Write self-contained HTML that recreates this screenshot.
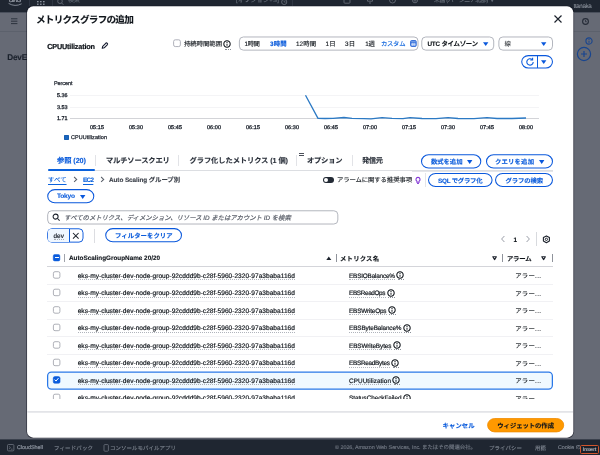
<!DOCTYPE html>
<html lang="ja">
<head>
<meta charset="utf-8">
<title>メトリクスグラフの追加</title>
<style>
html,body{margin:0;padding:0}
body{width:600px;height:455px;overflow:hidden;position:relative;background:#666a75;font-family:"Liberation Sans","Noto Sans CJK JP",sans-serif;color:#0f141a}
#w{position:absolute;left:0;top:0;width:600px;height:455px;overflow:hidden;will-change:transform}
.a{position:absolute;box-sizing:border-box}
.t{position:absolute;white-space:nowrap;margin:0;padding:0;text-rendering:geometricPrecision;-webkit-text-stroke:0.12px}
.l{-webkit-text-stroke:0.2px}
.b{font-weight:700}
.b.l{-webkit-text-stroke:0.1px}
.bl{color:#0b5cdc}
svg{position:absolute;overflow:visible}
</style>
</head>
<body>
<div id="w">
<div class="a" style="left:0px;top:0px;width:600px;height:12px;background:#1f2631"></div>
<div class="a" style="left:0px;top:12px;width:600px;height:1px;background:#4a505c"></div>
<div class="a" style="left:0px;top:31px;width:600px;height:1px;background:#5c616c"></div>
<div class="a" style="left:0px;top:439px;width:600px;height:16px;background:#1f2631"></div>
<div class="a" style="left:0px;top:439px;width:600px;height:1px;background:#3a404c"></div>
<svg style="left:8px;top:0" width="15" height="7" viewBox="0 0 15 7"><path d="M0.6 3.4 Q7 7.2 13.6 3.8" fill="none" stroke="#8a919c" stroke-width="0.9"/></svg>
<span class="t  l" style="left:8.8px;top:-6.65px;font-size:8.6px;line-height:12.9px;letter-spacing:-1.448px;color:#969ca6;-webkit-text-stroke:0.1px">aws</span>
<svg style="left:37px;top:0" width="8" height="6" viewBox="0 0 8 6"><g fill="#8a919c"><rect x="0" y="1" width="1.6" height="1.3"/><rect x="3" y="1" width="1.6" height="1.3"/><rect x="6" y="1" width="1.6" height="1.3"/><rect x="0" y="3.6" width="1.6" height="1.3"/><rect x="3" y="3.6" width="1.6" height="1.3"/><rect x="6" y="3.6" width="1.6" height="1.3"/></g></svg>
<div class="a" style="left:52px;top:0px;width:1px;height:6px;background:#2e3542"></div>
<div class="a" style="left:29px;top:0px;width:1px;height:6px;background:#2e3542"></div>
<svg style="left:57px;top:0" width="7" height="6" viewBox="0 0 7 6"><circle cx="3" cy="1.2" r="2.3" fill="none" stroke="#6d747f" stroke-width="0.8"/><path d="M4.7 3 L6.4 4.8" stroke="#6d747f" stroke-width="0.8"/></svg>
<span class="t" style="left:68px;top:-3.12px;font-size:5.9px;line-height:8.85px;letter-spacing:0.219px;color:#5a626d">検索</span>
<span class="t" style="left:236px;top:-3.12px;font-size:5.9px;line-height:8.85px;letter-spacing:0.361px;color:#6a717c">[オプション+S]</span>
<svg style="left:281px;top:0" width="7" height="6" viewBox="0 0 7 6"><circle cx="3.2" cy="2" r="2.6" fill="none" stroke="#6d747f" stroke-width="0.8"/><path d="M3.2 0.5v1.6h1.4" fill="none" stroke="#6d747f" stroke-width="0.7"/></svg>
<div class="a" style="left:292px;top:0px;width:1px;height:6px;background:#2e3542"></div>
<svg style="left:343px;top:0" width="80" height="6" viewBox="0 0 80 6"><g fill="none" stroke="#6d747f" stroke-width="0.8"><rect x="1" y="-2" width="6" height="5.2" rx="0.8"/><path d="M24.5 -1 v2.2 h5 v-2.2 M26 3 h2"/><circle cx="49.5" cy="0" r="3"/><path d="M49.5 0.4v0.8"/><circle cx="72" cy="0.2" r="2.6"/><circle cx="72" cy="0.2" r="1"/></g></svg>
<span class="t" style="left:434.0px;top:-3.22px;font-size:5.9px;line-height:8.85px;letter-spacing:-0.38px;color:#6a717c">米国 (バージニア北部) ▼</span>
<span class="t  l" style="left:573.6px;top:1.98px;font-size:6.3px;line-height:9.45px;letter-spacing:-0.409px;color:#9197a1;-webkit-text-stroke:0.05px">ttanaka</span>
<svg style="left:11px;top:18px" width="7" height="7" viewBox="0 0 7 7"><path d="M0 0.8h6.4M0 3.2h6.4M0 5.6h6.4" stroke="#262d38" stroke-width="0.9"/></svg>
<span class="t b l" style="left:7.2px;top:52.15px;font-size:8.2px;line-height:12.3px;letter-spacing:-0.161px;color:#1b212c">DevE</span>
<svg style="left:581.3px;top:16.7px" width="9" height="9" viewBox="0 0 9 9"><circle cx="4.5" cy="4.5" r="2.9" fill="none" stroke="#252b37" stroke-width="1.1"/><path d="M4.5 3.1v1.6h1.2" fill="none" stroke="#252b37" stroke-width="0.85"/></svg>
<svg style="left:584.5px;top:36.5px" width="8" height="8" viewBox="0 0 8 8"><circle cx="4" cy="4" r="3.1" fill="none" stroke="#18458f" stroke-width="1.1"/><path d="M4 3.7v2.1" stroke="#18458f" stroke-width="0.95"/><circle cx="4" cy="2.4" r="0.55" fill="#18458f"/></svg>
<svg style="left:576.2px;top:46.3px" width="16" height="16" viewBox="0 0 16 16"><circle cx="8" cy="8" r="6.6" fill="none" stroke="#18458f" stroke-width="1.2"/><path d="M8 5v6M5 8h6" stroke="#18458f" stroke-width="1.2"/></svg>
<svg style="left:7px;top:443.5px" width="8" height="8" viewBox="0 0 8 8"><rect x="0.5" y="0.5" width="6.4" height="6.4" rx="1" fill="none" stroke="#6d747f" stroke-width="0.8"/><path d="M2 2.4l1.5 1.3L2 5M4 5.2h1.6" fill="none" stroke="#6d747f" stroke-width="0.7"/></svg>
<span class="t  l" style="left:17px;top:444.41px;font-size:5.45px;line-height:8.18px;letter-spacing:-0.035px;color:#8a919c">CloudShell</span>
<span class="t" style="left:54px;top:445.41px;font-size:5.45px;line-height:8.18px;letter-spacing:0.172px;color:#7d848f">フィードバック</span>
<svg style="left:103px;top:443.6px" width="7" height="8" viewBox="0 0 7 8"><rect x="1" y="0.6" width="4.4" height="6.6" rx="0.8" fill="none" stroke="#6d747f" stroke-width="0.8"/></svg>
<span class="t" style="left:110.0px;top:445.41px;font-size:5.45px;line-height:8.18px;letter-spacing:0.066px;color:#7d848f">コンソールモバイルアプリ</span>
<span class="t" style="left:335px;top:444.41px;font-size:5.45px;line-height:8.18px;letter-spacing:-0.044px;color:#737a85">© 2026, Amazon Web Services, Inc. またはその関連会社。</span>
<span class="t" style="left:489.0px;top:445.41px;font-size:5.45px;line-height:8.18px;letter-spacing:0.094px;color:#7d848f">プライバシー</span>
<span class="t" style="left:535px;top:445.41px;font-size:5.45px;line-height:8.18px;letter-spacing:0.109px;color:#7d848f">用語</span>
<span class="t" style="left:558px;top:444.41px;font-size:5.45px;line-height:8.18px;letter-spacing:-0.125px;color:#7d848f">Cookie の</span>
<div class="a" style="left:580px;top:445px;width:19px;height:9px;border:1px solid #d0552d;border-radius:1.5px;background:#1a1f29"></div>
<span class="t  l" style="left:582.6px;top:446.62px;font-size:5.3px;line-height:7.95px;letter-spacing:0.15px;color:#e6e9ee;-webkit-text-stroke:0">Insert</span>
<svg style="left:0;top:0" width="600" height="455"><rect x="26.6" y="5.9" width="547.2" height="432.2" rx="6.6" fill="#000410" fill-opacity="0.5"/><rect x="26.1" y="5.4" width="548.2" height="433.2" rx="7" fill="#000410" fill-opacity="0.22"/><rect x="27.05" y="6.35" width="546.3" height="431.3" rx="6.2" fill="#fff"/></svg>
<span class="t b" style="left:36.0px;top:14.4px;font-size:9.6px;line-height:14.4px;letter-spacing:-0.745px;">メトリクスグラフの追加</span>
<svg style="left:553.3px;top:14.2px" width="10" height="10" viewBox="0 0 10 10"><path d="M1.5 1.5l7 7M8.5 1.5l-7 7" stroke="#1c222c" stroke-width="1.15" fill="none"/></svg>
<span class="t b l" style="left:47.2px;top:41.75px;font-size:7.27px;line-height:10.9px;letter-spacing:-0.174px;-webkit-text-stroke:0.22px">CPUUtilization</span>
<svg style="left:101.2px;top:42px" width="7.5" height="7.5" viewBox="0 0 8 8"><path d="M1.3 6.7l0.5-2.1 3.5-3.5q0.5-0.4 1 0l0.6 0.6q0.4 0.5 0 1l-3.5 3.5z" fill="none" stroke="#141a2e" stroke-width="1.15" stroke-linejoin="round"/></svg>
<svg style="left:0;top:0" width="600" height="455"><rect x="173.62" y="39.82" width="6.75" height="6.75" rx="1.7" fill="#fff" stroke="#a0a3ad" stroke-width="0.85"/></svg>
<span class="t" style="left:184px;top:39.83px;font-size:6.36px;line-height:9.54px;letter-spacing:-0.031px;">持続時間範囲</span>
<svg style="left:223.3px;top:40px" width="8" height="8" viewBox="0 0 8 8"><circle cx="4" cy="4" r="3.2" fill="none" stroke="#0f141a" stroke-width="1.05"/><path d="M4 3.7v2.1" stroke="#0f141a" stroke-width="0.95"/><circle cx="4" cy="2.4" r="0.55" fill="#0f141a"/></svg>
<div class="a" style="left:224.5px;top:48.6px;width:6.5px;height:0px;border-top:1px dotted #8a8f98"></div>
<svg style="left:0;top:0" width="600" height="455"><rect x="239.38" y="36.98" width="178.65" height="13.15" rx="4" fill="#fff" stroke="#afb2ba" stroke-width="0.95"/></svg>
<span class="t" style="left:244.6px;top:39.83px;font-size:6.36px;line-height:9.54px;letter-spacing:-0.433px;">1時間</span>
<span class="t b bl" style="left:270px;top:39.83px;font-size:6.36px;line-height:9.54px;letter-spacing:0.117px;">3時間</span>
<span class="t" style="left:296px;top:39.83px;font-size:6.36px;line-height:9.54px;letter-spacing:0.068px;">12時間</span>
<span class="t" style="left:325.5px;top:39.83px;font-size:6.36px;line-height:9.54px;letter-spacing:0.094px;">1日</span>
<span class="t" style="left:345px;top:39.83px;font-size:6.36px;line-height:9.54px;letter-spacing:0.094px;">3日</span>
<span class="t" style="left:365.2px;top:39.83px;font-size:6.36px;line-height:9.54px;letter-spacing:-0.206px;">1週</span>
<span class="t" style="left:381px;top:39.83px;font-size:6.36px;line-height:9.54px;letter-spacing:-0.312px;color:#0b62dc">カスタム</span>
<svg style="left:409.6px;top:40px" width="7" height="7" viewBox="0 0 7 7"><rect x="0.6" y="0.6" width="5.6" height="5.8" rx="0.9" fill="#7ea6ea" stroke="#2f6bd8" stroke-width="1"/><path d="M1 2.4h4.8" stroke="#2f6bd8" stroke-width="0.8"/><path d="M2.6 2.8v3.2M4.2 2.8v3.2M1.2 4.4h4.4" stroke="#e8effc" stroke-width="0.5"/></svg>
<svg style="left:0;top:0" width="600" height="455"><rect x="421.78" y="36.98" width="71.95" height="13.15" rx="4" fill="#fff" stroke="#afb2ba" stroke-width="0.95"/></svg>
<span class="t b" style="left:427.5px;top:39.83px;font-size:6.36px;line-height:9.54px;letter-spacing:-0.229px;">UTC タイムゾーン</span>
<svg style="left:483.2px;top:42px" width="6" height="5" viewBox="0 0 6 5"><path d="M0 0.3h5.4L2.7 4.1z" fill="#0a58dc"/></svg>
<svg style="left:0;top:0" width="600" height="455"><rect x="498.88" y="36.98" width="53.65" height="13.15" rx="4" fill="#fff" stroke="#afb2ba" stroke-width="0.95"/></svg>
<span class="t" style="left:504.6px;top:39.83px;font-size:6.36px;line-height:9.54px;-webkit-text-stroke:0">線</span>
<svg style="left:540.6px;top:42px" width="6" height="5" viewBox="0 0 6 5"><path d="M0 0.3h5.4L2.7 4.1z" fill="#0a58dc"/></svg>
<svg style="left:0;top:0" width="600" height="455"><rect x="521.73" y="55.62" width="30.75" height="12.45" rx="6.7" fill="#fff" stroke="#0a58dc" stroke-width="1.05"/></svg>
<div class="a" style="left:537px;top:55.6px;width:1px;height:12.6px;background:#0b5cdc"></div>
<svg style="left:525px;top:57px" width="10" height="10" viewBox="0 0 10 10"><path d="M8.2 5a3.2 3.2 0 1 1-1.1-2.5" fill="none" stroke="#0b5cdc" stroke-width="1.1"/><path d="M7.6 0.7v2.3h-2.3" fill="none" stroke="#0b5cdc" stroke-width="1.1"/></svg>
<svg style="left:541px;top:60px" width="6" height="5" viewBox="0 0 6 5"><path d="M0 0.3h5.4L2.7 4.1z" fill="#0a58dc"/></svg>
<span class="t  l" style="left:54px;top:79.61px;font-size:5.45px;line-height:8.18px;letter-spacing:-0.042px;color:#1c222c;-webkit-text-stroke:0.25px">Percent</span>
<span class="t  l" style="left:57px;top:92.31px;font-size:5.45px;line-height:8.18px;letter-spacing:-0.031px;color:#1c222c;-webkit-text-stroke:0.3px">5.36</span>
<span class="t  l" style="left:57px;top:103.91px;font-size:5.45px;line-height:8.18px;letter-spacing:-0.031px;color:#1c222c;-webkit-text-stroke:0.3px">3.53</span>
<span class="t  l" style="left:57px;top:114.51px;font-size:5.45px;line-height:8.18px;letter-spacing:-0.031px;color:#1c222c;-webkit-text-stroke:0.3px">1.71</span>
<div class="a" style="left:69.5px;top:95px;width:469.5px;height:1px;background:#f4f4f6"></div>
<div class="a" style="left:69.5px;top:107px;width:469.5px;height:1px;background:#f4f4f6"></div>
<div class="a" style="left:69.5px;top:118px;width:469.5px;height:1px;background:#d3d4d8"></div>
<span class="t  l" style="left:90px;top:124.01px;font-size:5.45px;line-height:8.18px;letter-spacing:0.098px;color:#1c222c;-webkit-text-stroke:0.3px">05:15</span>
<span class="t  l" style="left:129px;top:124.01px;font-size:5.45px;line-height:8.18px;letter-spacing:0.098px;color:#1c222c;-webkit-text-stroke:0.3px">05:30</span>
<span class="t  l" style="left:168px;top:124.01px;font-size:5.45px;line-height:8.18px;letter-spacing:0.098px;color:#1c222c;-webkit-text-stroke:0.3px">05:45</span>
<span class="t  l" style="left:207px;top:124.01px;font-size:5.45px;line-height:8.18px;letter-spacing:0.098px;color:#1c222c;-webkit-text-stroke:0.3px">06:00</span>
<span class="t  l" style="left:246px;top:124.01px;font-size:5.45px;line-height:8.18px;letter-spacing:0.098px;color:#1c222c;-webkit-text-stroke:0.3px">06:15</span>
<span class="t  l" style="left:285px;top:124.01px;font-size:5.45px;line-height:8.18px;letter-spacing:0.098px;color:#1c222c;-webkit-text-stroke:0.3px">06:30</span>
<span class="t  l" style="left:324px;top:124.01px;font-size:5.45px;line-height:8.18px;letter-spacing:0.098px;color:#1c222c;-webkit-text-stroke:0.3px">06:45</span>
<span class="t  l" style="left:363px;top:124.01px;font-size:5.45px;line-height:8.18px;letter-spacing:0.098px;color:#1c222c;-webkit-text-stroke:0.3px">07:00</span>
<span class="t  l" style="left:402px;top:124.01px;font-size:5.45px;line-height:8.18px;letter-spacing:0.098px;color:#1c222c;-webkit-text-stroke:0.3px">07:15</span>
<span class="t  l" style="left:441px;top:124.01px;font-size:5.45px;line-height:8.18px;letter-spacing:0.098px;color:#1c222c;-webkit-text-stroke:0.3px">07:30</span>
<span class="t  l" style="left:480px;top:124.01px;font-size:5.45px;line-height:8.18px;letter-spacing:0.098px;color:#1c222c;-webkit-text-stroke:0.3px">07:45</span>
<span class="t  l" style="left:519px;top:124.01px;font-size:5.45px;line-height:8.18px;letter-spacing:0.098px;color:#1c222c;-webkit-text-stroke:0.3px">08:00</span>
<svg style="left:0;top:0" width="600" height="455" viewBox="0 0 600 455"><polyline fill="none" stroke="#2b79c4" stroke-width="1.3" stroke-linejoin="round" points="305.5,95.3 318,118.4 325,118.5 333,118.3 344,117.5 352,118.3 364,118.6 371,118.8 382,117.7 392,118.4 403,118.6 410,117.6 422,118.5 436,118.6 448,117.6 458,118.5 474,118.7 487,117.6 497,118.5 512,118.5 526,118"/></svg>
<div class="a" style="left:64.2px;top:134.5px;width:5.3px;height:5.3px;background:#1a66be;border-radius:1.3px;box-shadow:inset 0 0 0 0.6px #1457a8"></div>
<span class="t  l" style="left:71px;top:134.11px;font-size:5.45px;line-height:8.18px;letter-spacing:0.072px;color:#1c222c;-webkit-text-stroke:0.25px">CPUUtilization</span>
<div class="a" style="left:48px;top:170px;width:504.5px;height:1px;background:#dcdee2"></div>
<div class="a" style="left:48px;top:169px;width:46.7px;height:2px;background:#0b62dc;border-radius:1px"></div>
<span class="t b bl" style="left:57px;top:155.95px;font-size:7.27px;line-height:10.9px;letter-spacing:-0.081px;">参照 (20)</span>
<div class="a" style="left:95px;top:154.5px;width:1px;height:11.5px;background:#e2e3e7"></div>
<span class="t b" style="left:106px;top:155.95px;font-size:7.27px;line-height:10.9px;letter-spacing:-0.153px;color:#2a303a">マルチソースクエリ</span>
<div class="a" style="left:178px;top:154.5px;width:1px;height:11.5px;background:#e2e3e7"></div>
<span class="t b" style="left:189.6px;top:155.95px;font-size:7.27px;line-height:10.9px;letter-spacing:-0.093px;color:#2a303a">グラフ化したメトリクス (1 個)</span>
<div class="a" style="left:296px;top:154.5px;width:1px;height:11.5px;background:#e2e3e7"></div>
<div class="a" style="left:299px;top:153px;width:5.4px;height:1px;background:#4a4f59"></div>
<div class="a" style="left:299px;top:155px;width:5.4px;height:1px;background:#4a4f59"></div>
<span class="t b" style="left:307px;top:155.95px;font-size:7.27px;line-height:10.9px;letter-spacing:-0.207px;color:#2a303a">オプション</span>
<div class="a" style="left:352px;top:154.5px;width:1px;height:11.5px;background:#e2e3e7"></div>
<span class="t b" style="left:362px;top:155.95px;font-size:7.27px;line-height:10.9px;letter-spacing:-0.398px;color:#2a303a">発信元</span>
<svg style="left:0;top:0" width="600" height="455"><rect x="421.52" y="154.83" width="59.25" height="13.15" rx="7.1" fill="#fff" stroke="#0a58dc" stroke-width="1.05"/></svg>
<span class="t b bl" style="left:431px;top:157.83px;font-size:6.36px;line-height:9.54px;letter-spacing:-0.074px;">数式を追加</span>
<svg style="left:466.9px;top:159.7px" width="6" height="5" viewBox="0 0 6 5"><path d="M0 0.1h5.4L2.7 3.9z" fill="#0a58dc"/></svg>
<svg style="left:0;top:0" width="600" height="455"><rect x="486.52" y="154.83" width="65.95" height="13.15" rx="7.1" fill="#fff" stroke="#0a58dc" stroke-width="1.05"/></svg>
<span class="t b bl" style="left:495.0px;top:157.83px;font-size:6.36px;line-height:9.54px;letter-spacing:0.169px;">クエリを追加</span>
<svg style="left:538.6px;top:159.7px" width="6" height="5" viewBox="0 0 6 5"><path d="M0 0.1h5.4L2.7 3.9z" fill="#0a58dc"/></svg>
<span class="t" style="left:48px;top:175.93px;font-size:6.36px;line-height:9.54px;letter-spacing:0.055px;color:#0b62dc;text-decoration:underline;text-decoration-thickness:0.8px;text-underline-offset:1.5px">すべて</span>
<svg style="left:72.6px;top:176.2px" width="5" height="7" viewBox="0 0 5 7"><path d="M1.1 1l2.6 2.4L1.1 5.8" fill="none" stroke="#5a606a" stroke-width="1.05"/></svg>
<span class="t b l" style="left:83px;top:175.93px;font-size:6.36px;line-height:9.54px;letter-spacing:-0.688px;color:#0b62dc;text-decoration:underline;text-decoration-thickness:0.8px;text-underline-offset:1.5px">EC2</span>
<svg style="left:100px;top:176.2px" width="5" height="7" viewBox="0 0 5 7"><path d="M1.1 1l2.6 2.4L1.1 5.8" fill="none" stroke="#5a606a" stroke-width="1.05"/></svg>
<span class="t b" style="left:109px;top:176.03px;font-size:6.36px;line-height:9.54px;letter-spacing:-0.062px;color:#3a3f48">Auto Scaling グループ別</span>
<div class="a" style="left:323px;top:176.6px;width:11.3px;height:6.4px;background:#232a35;border-radius:3.2px"></div>
<div class="a" style="left:324px;top:177.6px;width:4.4px;height:4.4px;background:#fff;border-radius:50%"></div>
<span class="t" style="left:337.0px;top:176.23px;font-size:6.36px;line-height:9.54px;letter-spacing:-0.102px;">アラームに関する推奨事項</span>
<svg style="left:414px;top:175.6px" width="8" height="9" viewBox="0 0 8 9"><path d="M4 1.4a2 2 0 0 1 1.1 3.7v1.1H2.9V5.1A2 2 0 0 1 4 1.4zM3.1 7.5h1.8" fill="none" stroke="#8438d6" stroke-width="1.1"/></svg>
<div class="a" style="left:425px;top:173px;width:1px;height:14px;background:#e4e5e9"></div>
<svg style="left:0;top:0" width="600" height="455"><rect x="428.52" y="173.43" width="63.55" height="13.15" rx="7.1" fill="#fff" stroke="#0a58dc" stroke-width="1.05"/></svg>
<span class="t b bl" style="left:438px;top:177.43px;font-size:6.36px;line-height:9.54px;letter-spacing:-0.254px;">SQL でグラフ化</span>
<svg style="left:0;top:0" width="600" height="455"><rect x="495.52" y="173.43" width="56.95" height="13.15" rx="7.1" fill="#fff" stroke="#0a58dc" stroke-width="1.05"/></svg>
<span class="t b bl" style="left:505.5px;top:177.43px;font-size:6.36px;line-height:9.54px;letter-spacing:-0.131px;">グラフの検索</span>
<div class="a" style="left:412px;top:171px;width:141px;height:1px;background:#e4e5e9"></div>
<svg style="left:0;top:0" width="600" height="455"><rect x="47.73" y="189.62" width="46.05" height="13.15" rx="7.1" fill="#fff" stroke="#0a58dc" stroke-width="1.05"/></svg>
<span class="t b bl l" style="left:57px;top:191.55px;font-size:6.6px;line-height:9.9px;letter-spacing:-0.234px;">Tokyo</span>
<svg style="left:79.9px;top:194.5px" width="6" height="5" viewBox="0 0 6 5"><path d="M0 0.1h5.4L2.7 3.9z" fill="#0a58dc"/></svg>
<svg style="left:0;top:0" width="600" height="455"><rect x="47.68" y="210.78" width="290.15" height="13.25" rx="4" fill="#fff" stroke="#afb2ba" stroke-width="0.95"/></svg>
<svg style="left:52px;top:213.4px" width="9" height="9" viewBox="0 0 9 9"><circle cx="3.6" cy="3.6" r="2.5" fill="none" stroke="#1c222c" stroke-width="1.05"/><path d="M5.5 5.5l2.1 2.1" stroke="#1c222c" stroke-width="1.05"/></svg>
<span class="t" style="left:64.25px;top:213.83px;font-size:6.36px;line-height:9.54px;letter-spacing:-0.028px;color:#585d67;font-style:italic;-webkit-text-stroke:0.18px">すべてのメトリクス、ディメンション、リソース ID またはアカウント ID を検索</span>
<svg style="left:0;top:0" width="600" height="455"><rect x="47.68" y="228.78" width="35.35" height="13.35" rx="4" fill="#fff" stroke="#0a58dc" stroke-width="0.95"/></svg>
<div class="a" style="left:48px;top:229px;width:21px;height:13px;background:#f0f7ff;border-radius:3px 0 0 3px"></div>
<span class="t  l" style="left:53.4px;top:232.13px;font-size:6.36px;line-height:9.54px;letter-spacing:0.167px;color:#1c222c">dev</span>
<div class="a" style="left:53.5px;top:239px;width:10.5px;height:0px;border-top:1px dotted #a8acb4"></div>
<div class="a" style="left:69px;top:228.8px;width:1px;height:13.4px;background:#0b5cdc"></div>
<svg style="left:72.4px;top:231.6px" width="8" height="8" viewBox="0 0 8 8"><path d="M1 1l5.6 5.6M6.6 1L1 6.6" stroke="#1c222c" stroke-width="1.05" fill="none"/></svg>
<div class="a" style="left:94px;top:228.5px;width:1px;height:14px;background:#dcdde1"></div>
<svg style="left:0;top:0" width="600" height="455"><rect x="105.73" y="228.62" width="75.75" height="13.15" rx="7.1" fill="#fff" stroke="#0a58dc" stroke-width="1.05"/></svg>
<span class="t b bl" style="left:115.0px;top:231.63px;font-size:6.36px;line-height:9.54px;letter-spacing:0.061px;">フィルターをクリア</span>
<svg style="left:500px;top:235px" width="6" height="8" viewBox="0 0 6 8"><path d="M4.4 1L1.6 4l2.8 3" fill="none" stroke="#9a9ea8" stroke-width="1"/></svg>
<span class="t b l" style="left:513.5px;top:236.13px;font-size:6.36px;line-height:9.54px;">1</span>
<svg style="left:524.5px;top:235px" width="6" height="8" viewBox="0 0 6 8"><path d="M1.6 1l2.8 3-2.8 3" fill="none" stroke="#9a9ea8" stroke-width="1"/></svg>
<div class="a" style="left:536px;top:232px;width:1px;height:14px;background:#d8dade"></div>
<svg style="left:542px;top:235px" width="9" height="9" viewBox="0 0 9 9"><path d="M4.4 0.9l3 1.7v3.5l-3 1.7-3-1.7V2.6z" fill="none" stroke="#1c222c" stroke-width="1.1" stroke-linejoin="round"/><circle cx="4.4" cy="4.35" r="1.15" fill="none" stroke="#1c222c" stroke-width="0.95"/></svg>
<svg style="left:0;top:0" width="600" height="455"><rect x="53.25" y="254.55" width="6.6" height="6.4" rx="1.5" fill="#0b5cdc" stroke="#0b5cdc" stroke-width="0.5"/></svg>
<div class="a" style="left:54.6px;top:257.3px;width:4px;height:1px;background:#fff"></div>
<div class="a" style="left:64px;top:254px;width:1px;height:8px;background:#a0a3ab"></div>
<span class="t b l" style="left:69px;top:253.73px;font-size:6.36px;line-height:9.54px;letter-spacing:-0.007px;">AutoScalingGroupName 20/20</span>
<svg style="left:325.6px;top:256.2px" width="6" height="5" viewBox="0 0 6 5"><path d="M0.3 4h5L2.8 0.5z" fill="#1c222c"/></svg>
<div class="a" style="left:336px;top:254px;width:1px;height:8px;background:#8f939b"></div>
<span class="t b" style="left:340.0px;top:254.53px;font-size:6.36px;line-height:9.54px;letter-spacing:0.206px;">メトリクス名</span>
<svg style="left:491.7px;top:255.8px" width="6" height="5" viewBox="0 0 6 5"><path d="M0.8 0.7h3.6L2.6 3.6z" fill="#fff" stroke="#1c222c" stroke-width="1.1" stroke-linejoin="round"/></svg>
<div class="a" style="left:502px;top:254px;width:1px;height:8px;background:#8f939b"></div>
<span class="t b" style="left:507px;top:254.53px;font-size:6.36px;line-height:9.54px;letter-spacing:-0.25px;">アラーム</span>
<svg style="left:540.9px;top:255.8px" width="6" height="5" viewBox="0 0 6 5"><path d="M0.8 0.7h3.6L2.6 3.6z" fill="#fff" stroke="#1c222c" stroke-width="1.1" stroke-linejoin="round"/></svg>
<div class="a" style="left:552px;top:254px;width:1px;height:8px;background:#8f939b"></div>
<div class="a" style="left:47px;top:266px;width:506px;height:1px;background:#d4d5da"></div>
<div class="a" style="left:27px;top:266px;width:546px;height:133px;overflow:hidden">
<div class="a" style="left:-27px;top:-266px;width:600px;height:455px">
<svg style="left:0;top:0" width="600" height="455"><rect x="53.4" y="271.7" width="6.5" height="6.5" rx="1.6" fill="#fff" stroke="#9a9da6" stroke-width="0.8"/></svg>
<div class="a" style="left:47px;top:283.5px;width:506px;height:1px;background:#f1f1f4"></div>
<span class="t  l" style="left:77.7px;top:271.65px;font-size:6.6px;line-height:9.9px;letter-spacing:0.005px;color:#0f141a;-webkit-text-stroke:0.18px">eks-my-cluster-dev-node-group-92cddd9b-c28f-5960-2320-97a3baba116d</span>
<div class="a" style="left:77.5px;top:279.0px;width:217px;height:0px;border-top:1px dotted #b0b4bc"></div>
<span class="t  l" style="left:349px;top:271.73px;font-size:6.36px;line-height:9.54px;letter-spacing:-0.173px;color:#0f141a;-webkit-text-stroke:0.18px">EBSIOBalance%</span>
<div class="a" style="left:349px;top:279.0px;width:46px;height:0px;border-top:1px dotted #b0b4bc"></div>
<svg style="left:396.4px;top:271.3px" width="8" height="8" viewBox="0 0 8 8"><circle cx="4" cy="4" r="3.2" fill="none" stroke="#0f141a" stroke-width="1.05"/><path d="M4 3.7v2.1" stroke="#0f141a" stroke-width="0.95"/><circle cx="4" cy="2.4" r="0.55" fill="#0f141a"/></svg>
<div class="a" style="left:397.5px;top:279.4px;width:6.5px;height:0px;border-top:1px dotted #8a8f98"></div>
<span class="t" style="left:515.2px;top:271.93px;font-size:6.36px;line-height:9.54px;letter-spacing:0.282px;color:#0f141a">アラー...</span>
<svg style="left:0;top:0" width="600" height="455"><rect x="53.4" y="289.2" width="6.5" height="6.5" rx="1.6" fill="#fff" stroke="#9a9da6" stroke-width="0.8"/></svg>
<div class="a" style="left:47px;top:301.0px;width:506px;height:1px;background:#f1f1f4"></div>
<span class="t  l" style="left:77.7px;top:289.15px;font-size:6.6px;line-height:9.9px;letter-spacing:0.005px;color:#0f141a;-webkit-text-stroke:0.18px">eks-my-cluster-dev-node-group-92cddd9b-c28f-5960-2320-97a3baba116d</span>
<div class="a" style="left:77.5px;top:296.5px;width:217px;height:0px;border-top:1px dotted #b0b4bc"></div>
<span class="t  l" style="left:349px;top:289.23px;font-size:6.36px;line-height:9.54px;letter-spacing:-0.344px;color:#0f141a;-webkit-text-stroke:0.18px">EBSReadOps</span>
<div class="a" style="left:349px;top:296.5px;width:36.5px;height:0px;border-top:1px dotted #b0b4bc"></div>
<svg style="left:386.9px;top:288.8px" width="8" height="8" viewBox="0 0 8 8"><circle cx="4" cy="4" r="3.2" fill="none" stroke="#0f141a" stroke-width="1.05"/><path d="M4 3.7v2.1" stroke="#0f141a" stroke-width="0.95"/><circle cx="4" cy="2.4" r="0.55" fill="#0f141a"/></svg>
<div class="a" style="left:388.0px;top:296.9px;width:6.5px;height:0px;border-top:1px dotted #8a8f98"></div>
<span class="t" style="left:515.2px;top:290.43px;font-size:6.36px;line-height:9.54px;letter-spacing:0.282px;color:#0f141a">アラー...</span>
<svg style="left:0;top:0" width="600" height="455"><rect x="53.4" y="306.7" width="6.5" height="6.5" rx="1.6" fill="#fff" stroke="#9a9da6" stroke-width="0.8"/></svg>
<div class="a" style="left:47px;top:318.5px;width:506px;height:1px;background:#f1f1f4"></div>
<span class="t  l" style="left:77.7px;top:306.65px;font-size:6.6px;line-height:9.9px;letter-spacing:0.005px;color:#0f141a;-webkit-text-stroke:0.18px">eks-my-cluster-dev-node-group-92cddd9b-c28f-5960-2320-97a3baba116d</span>
<div class="a" style="left:77.5px;top:314.0px;width:217px;height:0px;border-top:1px dotted #b0b4bc"></div>
<span class="t  l" style="left:349px;top:306.73px;font-size:6.36px;line-height:9.54px;letter-spacing:-0.163px;color:#0f141a;-webkit-text-stroke:0.18px">EBSWriteOps</span>
<div class="a" style="left:349px;top:314.0px;width:37.5px;height:0px;border-top:1px dotted #b0b4bc"></div>
<svg style="left:387.9px;top:306.3px" width="8" height="8" viewBox="0 0 8 8"><circle cx="4" cy="4" r="3.2" fill="none" stroke="#0f141a" stroke-width="1.05"/><path d="M4 3.7v2.1" stroke="#0f141a" stroke-width="0.95"/><circle cx="4" cy="2.4" r="0.55" fill="#0f141a"/></svg>
<div class="a" style="left:389.0px;top:314.4px;width:6.5px;height:0px;border-top:1px dotted #8a8f98"></div>
<span class="t" style="left:515.2px;top:306.93px;font-size:6.36px;line-height:9.54px;letter-spacing:0.282px;color:#0f141a">アラー...</span>
<svg style="left:0;top:0" width="600" height="455"><rect x="53.4" y="324.2" width="6.5" height="6.5" rx="1.6" fill="#fff" stroke="#9a9da6" stroke-width="0.8"/></svg>
<div class="a" style="left:47px;top:336.0px;width:506px;height:1px;background:#f1f1f4"></div>
<span class="t  l" style="left:77.7px;top:324.15px;font-size:6.6px;line-height:9.9px;letter-spacing:0.005px;color:#0f141a;-webkit-text-stroke:0.18px">eks-my-cluster-dev-node-group-92cddd9b-c28f-5960-2320-97a3baba116d</span>
<div class="a" style="left:77.5px;top:331.5px;width:217px;height:0px;border-top:1px dotted #b0b4bc"></div>
<span class="t  l" style="left:349px;top:324.23px;font-size:6.36px;line-height:9.54px;letter-spacing:-0.114px;color:#0f141a;-webkit-text-stroke:0.18px">EBSByteBalance%</span>
<div class="a" style="left:349px;top:331.5px;width:52.5px;height:0px;border-top:1px dotted #b0b4bc"></div>
<svg style="left:402.9px;top:323.8px" width="8" height="8" viewBox="0 0 8 8"><circle cx="4" cy="4" r="3.2" fill="none" stroke="#0f141a" stroke-width="1.05"/><path d="M4 3.7v2.1" stroke="#0f141a" stroke-width="0.95"/><circle cx="4" cy="2.4" r="0.55" fill="#0f141a"/></svg>
<div class="a" style="left:404.0px;top:331.9px;width:6.5px;height:0px;border-top:1px dotted #8a8f98"></div>
<span class="t" style="left:515.2px;top:325.43px;font-size:6.36px;line-height:9.54px;letter-spacing:0.282px;color:#0f141a">アラー...</span>
<svg style="left:0;top:0" width="600" height="455"><rect x="53.4" y="341.7" width="6.5" height="6.5" rx="1.6" fill="#fff" stroke="#9a9da6" stroke-width="0.8"/></svg>
<div class="a" style="left:47px;top:353.5px;width:506px;height:1px;background:#f1f1f4"></div>
<span class="t  l" style="left:77.7px;top:341.65px;font-size:6.6px;line-height:9.9px;letter-spacing:0.005px;color:#0f141a;-webkit-text-stroke:0.18px">eks-my-cluster-dev-node-group-92cddd9b-c28f-5960-2320-97a3baba116d</span>
<div class="a" style="left:77.5px;top:349.0px;width:217px;height:0px;border-top:1px dotted #b0b4bc"></div>
<span class="t  l" style="left:349px;top:341.73px;font-size:6.36px;line-height:9.54px;letter-spacing:-0.072px;color:#0f141a;-webkit-text-stroke:0.18px">EBSWriteBytes</span>
<div class="a" style="left:349px;top:349.0px;width:42.5px;height:0px;border-top:1px dotted #b0b4bc"></div>
<svg style="left:392.9px;top:341.3px" width="8" height="8" viewBox="0 0 8 8"><circle cx="4" cy="4" r="3.2" fill="none" stroke="#0f141a" stroke-width="1.05"/><path d="M4 3.7v2.1" stroke="#0f141a" stroke-width="0.95"/><circle cx="4" cy="2.4" r="0.55" fill="#0f141a"/></svg>
<div class="a" style="left:394.0px;top:349.4px;width:6.5px;height:0px;border-top:1px dotted #8a8f98"></div>
<span class="t" style="left:515.2px;top:341.93px;font-size:6.36px;line-height:9.54px;letter-spacing:0.282px;color:#0f141a">アラー...</span>
<svg style="left:0;top:0" width="600" height="455"><rect x="53.4" y="359.2" width="6.5" height="6.5" rx="1.6" fill="#fff" stroke="#9a9da6" stroke-width="0.8"/></svg>
<span class="t  l" style="left:77.7px;top:359.15px;font-size:6.6px;line-height:9.9px;letter-spacing:0.005px;color:#0f141a;-webkit-text-stroke:0.18px">eks-my-cluster-dev-node-group-92cddd9b-c28f-5960-2320-97a3baba116d</span>
<div class="a" style="left:77.5px;top:366.5px;width:217px;height:0px;border-top:1px dotted #b0b4bc"></div>
<span class="t  l" style="left:349px;top:359.23px;font-size:6.36px;line-height:9.54px;letter-spacing:-0.259px;color:#0f141a;-webkit-text-stroke:0.18px">EBSReadBytes</span>
<div class="a" style="left:349px;top:366.5px;width:41px;height:0px;border-top:1px dotted #b0b4bc"></div>
<svg style="left:391.4px;top:358.8px" width="8" height="8" viewBox="0 0 8 8"><circle cx="4" cy="4" r="3.2" fill="none" stroke="#0f141a" stroke-width="1.05"/><path d="M4 3.7v2.1" stroke="#0f141a" stroke-width="0.95"/><circle cx="4" cy="2.4" r="0.55" fill="#0f141a"/></svg>
<div class="a" style="left:392.5px;top:366.9px;width:6.5px;height:0px;border-top:1px dotted #8a8f98"></div>
<span class="t" style="left:515.2px;top:360.43px;font-size:6.36px;line-height:9.54px;letter-spacing:0.282px;color:#0f141a">アラー...</span>
<svg style="left:0;top:0" width="600" height="455"><rect x="47.62" y="372.12" width="504.75" height="17.05" rx="3.8" fill="#f0f9ff" stroke="#2a78e8" stroke-width="1.25"/></svg>
<svg style="left:0;top:0" width="600" height="455"><rect x="53.25" y="376.55" width="6.8" height="6.8" rx="1.6" fill="#0b5cdc" stroke="#0b5cdc" stroke-width="0.5"/></svg>
<svg style="left:53.1px;top:376.4px" width="7" height="7" viewBox="0 0 7 7"><path d="M1.6 3.6l1.4 1.5 2.5-3" fill="none" stroke="#fff" stroke-width="1"/></svg>
<span class="t  l" style="left:77.7px;top:376.65px;font-size:6.6px;line-height:9.9px;letter-spacing:0.005px;color:#0f141a;-webkit-text-stroke:0.18px">eks-my-cluster-dev-node-group-92cddd9b-c28f-5960-2320-97a3baba116d</span>
<div class="a" style="left:77.5px;top:384.0px;width:217px;height:0px;border-top:1px dotted #b0b4bc"></div>
<span class="t  l" style="left:349px;top:376.73px;font-size:6.36px;line-height:9.54px;letter-spacing:0.077px;color:#0f141a;-webkit-text-stroke:0.18px">CPUUtilization</span>
<div class="a" style="left:349px;top:384.0px;width:42px;height:0px;border-top:1px dotted #b0b4bc"></div>
<svg style="left:392.4px;top:376.3px" width="8" height="8" viewBox="0 0 8 8"><circle cx="4" cy="4" r="3.2" fill="none" stroke="#0f141a" stroke-width="1.05"/><path d="M4 3.7v2.1" stroke="#0f141a" stroke-width="0.95"/><circle cx="4" cy="2.4" r="0.55" fill="#0f141a"/></svg>
<div class="a" style="left:393.5px;top:384.4px;width:6.5px;height:0px;border-top:1px dotted #8a8f98"></div>
<span class="t" style="left:515.2px;top:376.93px;font-size:6.36px;line-height:9.54px;letter-spacing:0.282px;color:#0f141a">アラー...</span>
<svg style="left:0;top:0" width="600" height="455"><rect x="53.4" y="394.2" width="6.5" height="6.5" rx="1.6" fill="#fff" stroke="#9a9da6" stroke-width="0.8"/></svg>
<span class="t  l" style="left:77.7px;top:394.15px;font-size:6.6px;line-height:9.9px;letter-spacing:0.005px;color:#0f141a;-webkit-text-stroke:0.18px">eks-my-cluster-dev-node-group-92cddd9b-c28f-5960-2320-97a3baba116d</span>
<div class="a" style="left:77.5px;top:401.5px;width:217px;height:0px;border-top:1px dotted #b0b4bc"></div>
<span class="t  l" style="left:349px;top:394.23px;font-size:6.36px;line-height:9.54px;letter-spacing:-0.055px;color:#0f141a;-webkit-text-stroke:0.18px">StatusCheckFailed</span>
<div class="a" style="left:349px;top:401.5px;width:52.5px;height:0px;border-top:1px dotted #b0b4bc"></div>
<svg style="left:402.9px;top:393.8px" width="8" height="8" viewBox="0 0 8 8"><circle cx="4" cy="4" r="3.2" fill="none" stroke="#0f141a" stroke-width="1.05"/><path d="M4 3.7v2.1" stroke="#0f141a" stroke-width="0.95"/><circle cx="4" cy="2.4" r="0.55" fill="#0f141a"/></svg>
<div class="a" style="left:404.0px;top:401.9px;width:6.5px;height:0px;border-top:1px dotted #8a8f98"></div>
<span class="t" style="left:515.2px;top:395.43px;font-size:6.36px;line-height:9.54px;letter-spacing:0.282px;color:#0f141a">アラー...</span>
</div></div>
<div class="a" style="left:27px;top:411px;width:546px;height:1px;background:#e3e4e8"></div>
<div class="a" style="left:27px;top:412px;width:546px;height:1px;background:#e9eaed"></div>
<span class="t b bl" style="left:442.6px;top:421.63px;font-size:6.36px;line-height:9.54px;letter-spacing:0.051px;">キャンセル</span>
<svg style="left:0;top:0" width="600" height="455"><rect x="487.6" y="418.5" width="76.1" height="13.4" rx="7.1" fill="#ff9900" stroke="#f08a00" stroke-width="0.8"/></svg>
<span class="t b" style="left:497.3px;top:421.63px;font-size:6.36px;line-height:9.54px;letter-spacing:-0.067px;color:#0f141a">ウィジェットの作成</span>
</div>
</body>
</html>
